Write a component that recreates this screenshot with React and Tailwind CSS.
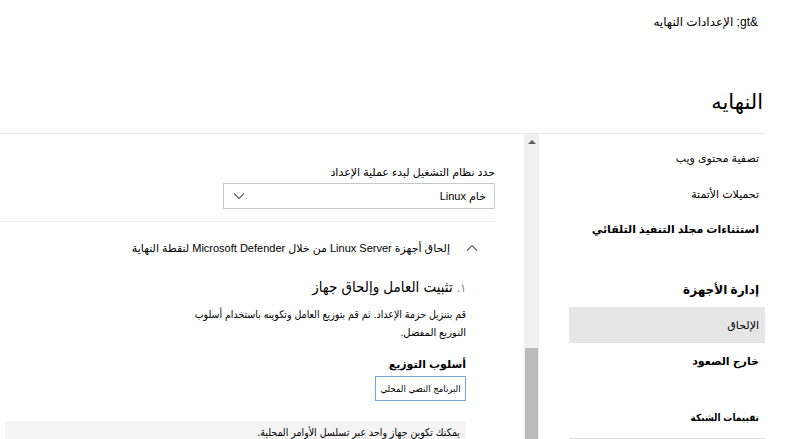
import React from "react";

const font = { fontFamily: '"Liberation Sans", "DejaVu Sans", sans-serif' };
const cond = { fontFamily: '"Liberation Sans", "DejaVu Sans Condensed", "DejaVu Sans", sans-serif' };

function ChevronDown() {
  return (
    <svg width="12" height="8" viewBox="0 0 12 8" fill="none">
      <path d="M1 1.5 L6 6.5 L11 1.5" stroke="#605e5c" strokeWidth="1.1" />
    </svg>
  );
}
function ChevronUp() {
  return (
    <svg width="12" height="8" viewBox="0 0 12 8" fill="none">
      <path d="M1 6.5 L6 1.5 L11 6.5" stroke="#605e5c" strokeWidth="1.1" />
    </svg>
  );
}

export default function App() {
  return (
    <div dir="rtl" className="w-[785px] h-[439px] overflow-hidden bg-white text-black pr-[20px]" style={font}>
      <div className="w-[765px] h-[134px] border-b border-[#e6e6e6]">
        <div className="pr-[7px] pt-[14px] text-[12px] leading-[16px]">{"&gt; الإعدادات النهايه"}</div>
        <div className="pr-[2px] mt-[59px] text-[21px] leading-[26px]">النهايه</div>
      </div>
      <div className="flex w-[765px] h-[305px]">
        {/* right nav */}
        <div className="w-[196px] shrink-0 text-[11px] leading-[14px] border-b border-[#e0e0e0]">
          <div className="h-[36px] mt-[6px] flex items-center pr-[6px]">تصفية محتوى ويب</div>
          <div className="h-[35px] flex items-center pr-[6px]">تحميلات الأتمتة</div>
          <div className="h-[36px] flex items-center pr-[6px] font-bold">استثناءات مجلد التنفيذ التلقائي</div>
          <div className="h-[26px]"></div>
          <div className="h-[34px] flex items-center pr-[6px] text-[12px] font-bold">إدارة الأجهزة</div>
          <div className="h-[36px] flex items-center pr-[6px] bg-[#e6e6e6]">الإلحاق</div>
          <div className="h-[36px] flex items-center pr-[6px] font-bold">خارج الصعود</div>
          <div className="h-[21px]"></div>
          <div className="h-[36px] flex items-center pr-[6px] font-bold text-[10px]" style={cond}>تقييمات الشبكة</div>
        </div>
        <div className="w-[30px] shrink-0"></div>
        {/* scrollbar */}
        <div className="w-[15px] shrink-0 bg-[#f0f0f0] flex flex-col items-center">
          <div className="mt-[6px] shrink-0 w-0 h-0 border-l-[4px] border-r-[4px] border-b-[4px] border-l-transparent border-r-transparent border-b-[#606060]"></div>
          <div className="mt-[204px] w-[13px] flex-1 bg-[#bcbcbc]"></div>
        </div>
        {/* main */}
        <div className="w-[524px] shrink-0 pr-[29px] text-[11px] leading-[14px]">
          <div className="pt-[31px]">حدد نظام التشغيل لبدء عملية الإعداد</div>
          <div className="mt-[4px] w-[272px] h-[26px] border border-[#c8c8c8] flex items-center justify-between pr-[8px] pl-[9px]">
            <span>خام Linux</span>
            <ChevronDown />
          </div>
          <div className="mt-[12px] border-t border-[#ececec]"></div>
          <div className="mt-[19px] flex items-center pr-[17px] gap-[16px]">
            <ChevronUp />
            <span>إلحاق أجهزة Linux Server من خلال Microsoft Defender لنقطة النهاية</span>
          </div>
          <div className="pr-[29px]">
            <div className="mt-[22px] text-[15px] leading-[20px]" style={cond}>
              <span className="text-[#777] text-[12px]">١.</span> تثبيت العامل وإلحاق جهاز
            </div>
            <div className="mt-[9px] text-[10.5px] font-medium" style={cond}>قم بتنزيل حزمة الإعداد. ثم قم بتوزيع العامل وتكوينه باستخدام أسلوب</div>
            <div className="mt-[5px] text-[10px]">التوزيع المفضل.</div>
            <div className="mt-[17px] font-bold">أسلوب التوزيع</div>
            <div className="mt-[5px] w-[91px] h-[25px] border border-[#6fa8dc] flex items-center justify-center text-[9.5px] whitespace-nowrap" style={cond}>البرنامج النصي المحلي</div>
            <div className="mt-[20px] w-[461px] h-[40px] bg-[#f4f4f4] pr-[6px] pt-[4px] text-[10.5px]" style={cond}>يمكنك تكوين جهاز واحد عبر تسلسل الأوامر المحلية.</div>
          </div>
        </div>
      </div>
    </div>
  );
}
